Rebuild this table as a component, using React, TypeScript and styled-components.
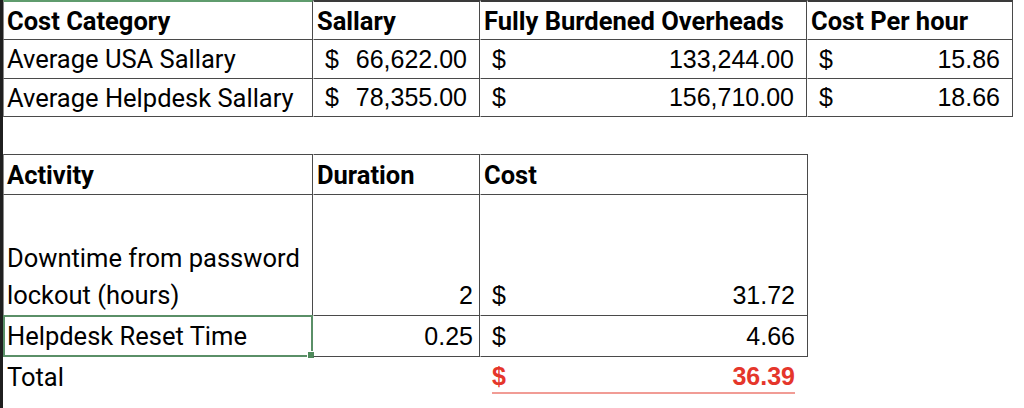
import React from "react";
import styled, { createGlobalStyle } from "styled-components";

const Global = createGlobalStyle`
  html, body { margin: 0; padding: 0; background: #fff; }
  body { font-family: Roboto, "Liberation Sans", Arial, sans-serif; color: #000; }
`;

const Page = styled.div`
  display: flex;
  width: 1024px;
  height: 408px;
  overflow: hidden;
  background: #fff;
`;

const LeftBar = styled.div`
  width: 3px;
  flex: none;
  background: #1f1f1f;
`;

const Sheet = styled.div`
  flex: 1;
  display: flex;
  flex-direction: column;
`;

const Grid = styled.div<{ $cols: string; $mt?: number }>`
  display: grid;
  grid-template-columns: ${(p) => p.$cols};
  margin-top: ${(p) => p.$mt ?? 0}px;
`;

const Cell = styled.div<{
  $h?: number;
  $bold?: boolean;
  $top?: string;
  $noBorder?: boolean;
  $align?: "center" | "end";
  $first?: boolean;
}>`
  position: relative;
  box-sizing: border-box;
  height: ${(p) => p.$h ?? 39}px;
  display: flex;
  align-items: ${(p) => (p.$align === "end" ? "flex-end" : "center")};
  padding: 0 6px 0 3px;
  font-size: 25.5px;
  font-weight: ${(p) => (p.$bold ? 700 : 400)};
  border-right: ${(p) => (p.$noBorder ? "1px solid transparent" : "1px solid #4a4a4a")};
  border-bottom: ${(p) => (p.$noBorder ? "1px solid transparent" : "1px solid #4a4a4a")};
  border-left: ${(p) => (p.$first && !p.$noBorder ? "1px solid #8a8a8a" : "1px solid transparent")};
  border-top: ${(p) => (p.$top ? p.$top : "none")};
  white-space: nowrap;
`;

const WrapText = styled.div`
  white-space: normal;
  line-height: 37px;
  padding-bottom: 1px;
`;

const Money = styled(Cell)<{ $red?: boolean }>`
  justify-content: space-between;
  padding: 0 12px 0 11px;
  font-size: 25px;
  font-family: "Liberation Sans", Arial, sans-serif;
  color: ${(p) => (p.$red ? "#e5362b" : "#000")};
`;

const Num = styled(Cell)`
  justify-content: flex-end;
  font-size: 25px;
  font-family: "Liberation Sans", Arial, sans-serif;
`;

const Underline = styled.div`
  position: absolute;
  left: 11px;
  right: 12px;
  bottom: 2px;
  height: 2px;
  background: #f19c95;
`;

const Selection = styled.div`
  position: absolute;
  inset: -1px -1px -1px -1px;
  border: 2px solid #5a8f67;
  pointer-events: none;
`;

const Handle = styled.div`
  position: absolute;
  right: -4px;
  bottom: -4px;
  width: 6px;
  height: 6px;
  background: #4f8a5c;
  border: 1px solid #fff;
`;

const topDark = "2px solid #3a3a3a";
const topGreen = "2px solid #5f9c6d";
const topThin = "1px solid #4a4a4a";

export default function App() {
  return (
    <>
      <Global />
      <Page>
        <LeftBar />
        <Sheet>
          <Grid $cols="310px 167px 327px 206px">
            <Cell $bold $first $h={40} $top={topGreen}>Cost Category</Cell>
            <Cell $bold $h={40} $top={topDark}>Sallary</Cell>
            <Cell $bold $h={40} $top={topDark}>Fully Burdened Overheads</Cell>
            <Cell $bold $h={40} $top={topDark}>Cost Per hour</Cell>

            <Cell $first>Average USA Sallary</Cell>
            <Money><span>$</span><span>66,622.00</span></Money>
            <Money><span>$</span><span>133,244.00</span></Money>
            <Money><span>$</span><span>15.86</span></Money>

            <Cell $first $h={38}>Average Helpdesk Sallary</Cell>
            <Money $h={38}><span>$</span><span>78,355.00</span></Money>
            <Money $h={38}><span>$</span><span>156,710.00</span></Money>
            <Money $h={38}><span>$</span><span>18.66</span></Money>
          </Grid>

          <Grid $cols="310px 167px 328px" $mt={37}>
            <Cell $bold $first $h={41} $top={topThin}>Activity</Cell>
            <Cell $bold $h={41} $top={topThin}>Duration</Cell>
            <Cell $bold $h={41} $top={topThin}>Cost</Cell>

            <Cell $first $h={121} $align="end">
              <WrapText>Downtime from password lockout (hours)</WrapText>
            </Cell>
            <Num $h={121} $align="end"><WrapText>2</WrapText></Num>
            <Money $h={121} $align="end">
              <WrapText>$</WrapText>
              <WrapText>31.72</WrapText>
            </Money>

            <Cell $first $h={41}>
              Helpdesk Reset Time
              <Selection>
                <Handle />
              </Selection>
            </Cell>
            <Num $h={41}>0.25</Num>
            <Money $h={41}><span>$</span><span>4.66</span></Money>

            <Cell $noBorder $first $h={40}>Total</Cell>
            <Cell $noBorder $h={40} />
            <Money $noBorder $red $bold $h={40}>
              <span>$</span>
              <span>36.39</span>
              <Underline />
            </Money>
          </Grid>
        </Sheet>
      </Page>
    </>
  );
}
